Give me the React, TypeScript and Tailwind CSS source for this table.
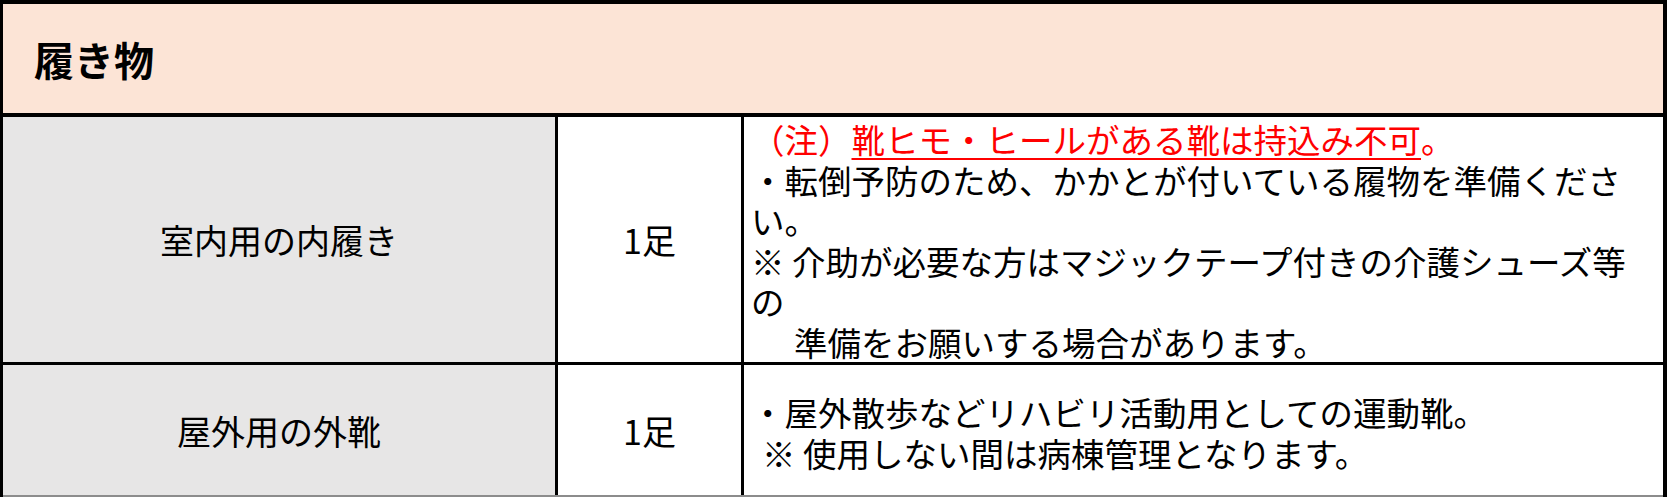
const font = { fontFamily: '"Noto Sans CJK JP", "Noto Sans", sans-serif' }

export default function App() {
  return (
    <div className="w-[1667px] h-[497px] bg-white text-black overflow-hidden" style={font}>
      {/* 見出し */}
      <div className="h-[117px] border-t-4 border-l-[3px] border-r-4 border-b-4 border-black bg-[#fce4d6] flex items-center">
        <div className="pl-[31px] text-[40px] font-bold leading-none">履き物</div>
      </div>

      {/* 1行目 */}
      <div className="flex h-[245px] border-l-[3px] border-r-4 border-black">
        <div className="w-[555px] border-r-[3px] border-black bg-[#e7e6e6] flex items-center justify-center text-[34px]">
          室内用の内履き
        </div>
        <div className="w-[186px] border-r-[3px] border-black flex items-center justify-center text-[34px]">
          1足
        </div>
        <div className="flex-1 pl-[7px] pt-[2px] text-[33.5px] leading-[40.5px] whitespace-nowrap">
          <div className="text-[#ff0000]">
            （注）<span className="underline decoration-2 underline-offset-[5px]">靴ヒモ・ヒールがある靴は持込み不可</span>。
          </div>
          <div>・転倒予防のため、かかとが付いている履物を準備くださ</div>
          <div>い。</div>
          <div>※ 介助が必要な方はマジックテープ付きの介護シューズ等</div>
          <div>の</div>
          <div className="pl-[43px]">準備をお願いする場合があります。</div>
        </div>
      </div>

      {/* 2行目 */}
      <div className="flex h-[133px] border-t-[3px] border-l-[3px] border-r-4 border-black">
        <div className="w-[555px] border-r-[3px] border-black bg-[#e7e6e6] flex items-center justify-center text-[34px]">
          屋外用の外靴
        </div>
        <div className="w-[186px] border-r-[3px] border-black flex items-center justify-center text-[34px]">
          1足
        </div>
        <div className="flex-1 pl-[7px] pt-[4px] flex flex-col justify-center text-[33.5px] leading-[41px] whitespace-nowrap">
          <div>・屋外散歩などリハビリ活動用としての運動靴。</div>
          <div className="pl-[11px]">※ 使用しない間は病棟管理となります。</div>
        </div>
      </div>
      <div className="h-[2px] border-l-[3px] border-r-4 border-black bg-[#8c8c8c]" />
    </div>
  )
}
